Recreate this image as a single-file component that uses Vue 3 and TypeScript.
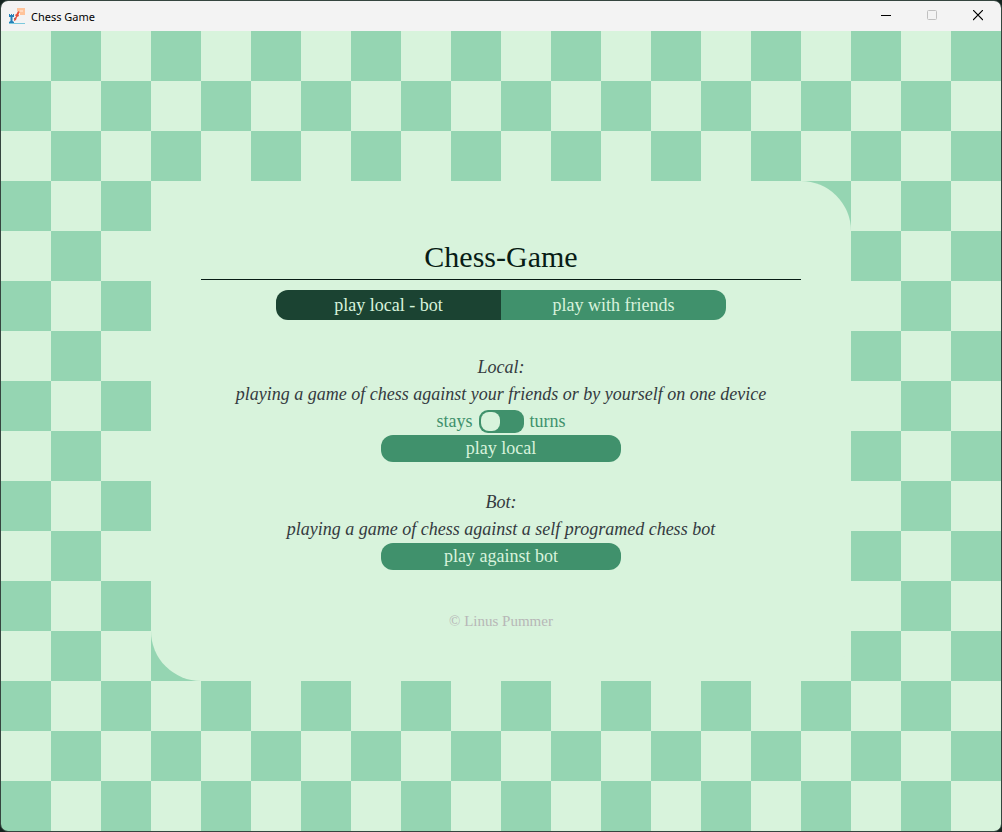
<script setup lang="ts">
import { ref } from 'vue'

const mode = ref<'solo' | 'friends'>('solo')
const boardTurns = ref(false)
</script>

<template>
  <div class="desktop">
    <div class="window">
      <header class="titlebar">
        <svg class="app-icon" width="16" height="16" viewBox="0 0 16 16" aria-hidden="true">
          <path d="M8 0h8v7h-5V5H9V3H8z" fill="#ffc49b" />
          <path d="M11 2h3v2h-3z" fill="#ffd9bf" />
          <path d="M0 6h1v1h1V6h1v1h1V6h1v3H3.500v4l1.500 1v1H0v-1l1.500-1V9H0z" fill="#2580b8" />
          <path d="M5 10.500l2-.5" stroke="#2580b8" />
          <path d="M9 3l1.500 1-1 2.500.5 1.500-2 1-1 3-2 1 0-1.500 2-3-1-1.500 1.500-1z" fill="#e8503a" />
          <path d="M0 15.500h16" stroke="#7cc8dc" />
        </svg>
        <span class="caption">Chess Game</span>
        <div class="controls">
          <button type="button" aria-label="Minimize">
            <svg width="10" height="11" viewBox="0 0 10 11"><path d="M0 5.500h10" stroke="#000" /></svg>
          </button>
          <button type="button" aria-label="Maximize" disabled>
            <svg width="10" height="11" viewBox="0 0 10 11">
              <rect x=".5" y=".5" width="9" height="9" rx="1" fill="none" stroke="#c0c0c0" />
            </svg>
          </button>
          <button type="button" aria-label="Close">
            <svg width="10" height="11" viewBox="0 0 10 11"><path d="M0 0l10 10M10 0L0 10" stroke="#000" stroke-width="1.200" /></svg>
          </button>
        </div>
      </header>

      <main class="board">
        <section class="panel">
          <h1>Chess-Game</h1>
          <nav class="tabs">
            <button type="button" :class="{ active: mode === 'solo' }" @click="mode = 'solo'">play local - bot</button>
            <button type="button" :class="{ active: mode === 'friends' }" @click="mode = 'friends'">play with friends</button>
          </nav>

          <section class="option">
            <h2>Local:</h2>
            <p>playing a game of chess against your friends or by yourself on one device</p>
            <div class="rotation">
              <label for="turns">stays</label>
              <input id="turns" v-model="boardTurns" type="checkbox" role="switch" />
              <label for="turns">turns</label>
            </div>
            <button type="button" class="play">play local</button>
          </section>

          <section class="option">
            <h2>Bot:</h2>
            <p>playing a game of chess against a self programed chess bot</p>
            <button type="button" class="play">play against bot</button>
          </section>

          <footer>© Linus Pummer</footer>
        </section>
      </main>
    </div>
  </div>
</template>

<style>
html,
body {
  margin: 0;
  background: #14231f;
}
</style>

<style scoped>
.desktop {
  min-height: 100vh;
  display: flex;
}

.window {
  flex: 1;
  display: flex;
  flex-direction: column;
  border: 1px solid #35453f;
  border-radius: 8px;
  overflow: hidden;
}

.titlebar {
  display: flex;
  align-items: center;
  height: 30px;
  padding-left: 8px;
  background: #f3f3f3;
}

.caption {
  flex: 1;
  margin-left: 6px;
  font: 11px "Noto Sans", sans-serif;
  color: #000;
}

.controls {
  display: flex;
}

.controls button {
  display: flex;
  align-items: center;
  justify-content: center;
  width: 46px;
  height: 30px;
  padding: 0 0 2px;
  border: 0;
  background: none;
}

.board {
  flex: 1;
  display: flex;
  align-items: flex-start;
  justify-content: center;
  padding: 150px 0 100px;
  background: conic-gradient(#95d5b2 25%, #d8f3dc 0 50%, #95d5b2 0 75%, #d8f3dc 0) 0 0 / 100px 100px;
}

.panel {
  box-sizing: border-box;
  width: 70%;
  min-height: 500px;
  padding: 50px 50px 40px;
  border-radius: 50px;
  background: #d8f3dc;
  font-family: "Liberation Serif", "Times New Roman", serif;
  text-align: center;
}

h1 {
  margin: 0;
  height: 48px;
  border-bottom: 1px solid #081c15;
  font-size: 30px;
  line-height: 52px;
  font-weight: 400;
  color: #081c15;
}

.tabs {
  display: flex;
  width: 75%;
  margin: 10px auto 0;
  border-radius: 12px;
  overflow: hidden;
}

.tabs button {
  flex: 1;
  height: 30px;
  padding: 0;
  border: 0;
  background: #40916c;
  color: #d8f3dc;
  font: 18px "Liberation Serif", "Times New Roman", serif;
}

.tabs .active {
  background: #1b4332;
}

.option {
  display: flex;
  flex-direction: column;
  align-items: center;
  margin-top: 27px;
}

.tabs + .option {
  margin-top: 34px;
}

h2,
p {
  margin: 0;
  font-size: 18px;
  line-height: 27px;
  font-weight: 400;
  font-style: italic;
  color: #343a40;
}

.rotation {
  display: flex;
  align-items: center;
  gap: 6px;
  height: 27px;
  font-size: 18px;
  color: #40916c;
}

.rotation input {
  appearance: none;
  box-sizing: border-box;
  display: flex;
  width: 45px;
  height: 23px;
  margin: 0;
  padding: 2px;
  border-radius: 9px;
  background: #40916c;
}

.rotation input::before {
  content: "";
  width: 19px;
  height: 19px;
  border-radius: 8px;
  background: #d8f3dc;
}

.rotation input:checked {
  justify-content: flex-end;
}

.play {
  width: 240px;
  height: 27px;
  padding: 0;
  border: 0;
  border-radius: 12px;
  background: #40916c;
  color: #d8f3dc;
  font: 18px "Liberation Serif", "Times New Roman", serif;
}

footer {
  margin-top: 40px;
  font-size: 15px;
  line-height: 22px;
  color: #b7b7b7;
}
</style>
